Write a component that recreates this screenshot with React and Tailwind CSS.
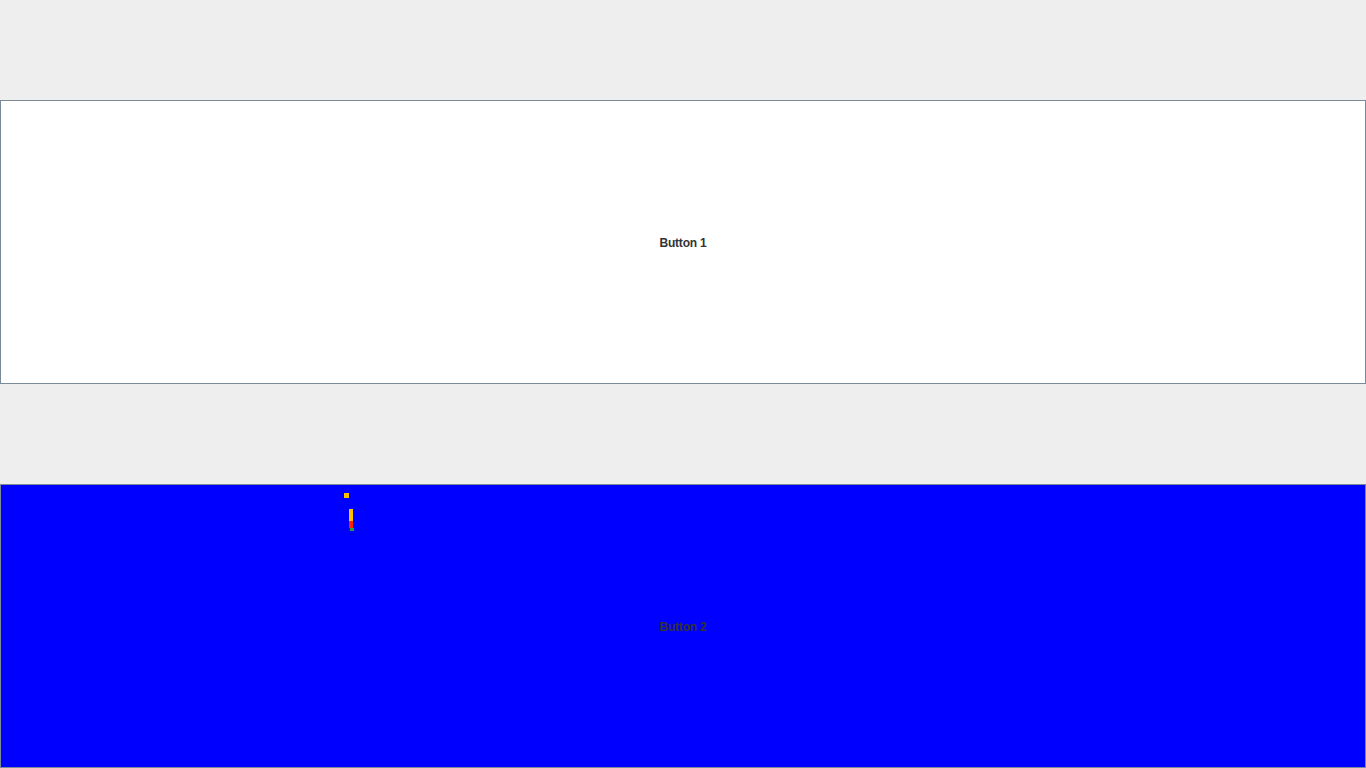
export default function App() {
  return (
    <div className="w-[1366px] h-[768px] bg-[#eeeeee] flex flex-col overflow-hidden" style={{ fontFamily: '"Liberation Sans", Arial, sans-serif' }}>
      <div className="h-[100px] shrink-0" />
      <button className="h-[284px] shrink-0 w-full bg-white border border-[#7a8a99] flex items-center justify-center pt-[2px] text-[12px] font-bold text-[#333333] tracking-[-0.2px]">
        Button 1
      </button>
      <div className="h-[100px] shrink-0" />
      <button className="relative h-[284px] shrink-0 w-full bg-[#0000ff] border border-[#7a8a99] flex items-center justify-center pt-[2px] text-[12px] font-bold text-[#333333] tracking-[-0.2px]">
        Button 2
        <span className="absolute left-[343px] top-[8px] w-[5px] h-[5px] bg-[#ffc000]" />
        <span className="absolute left-[348px] top-[24px] w-[4px] h-[12px] bg-[#ffc000]" />
        <span className="absolute left-[348px] top-[36px] w-[4px] h-[7px] bg-[#ff2000]" />
        <span className="absolute left-[349px] top-[43px] w-[4px] h-[3px] bg-[#20a040]" />
      </button>
    </div>
  )
}
